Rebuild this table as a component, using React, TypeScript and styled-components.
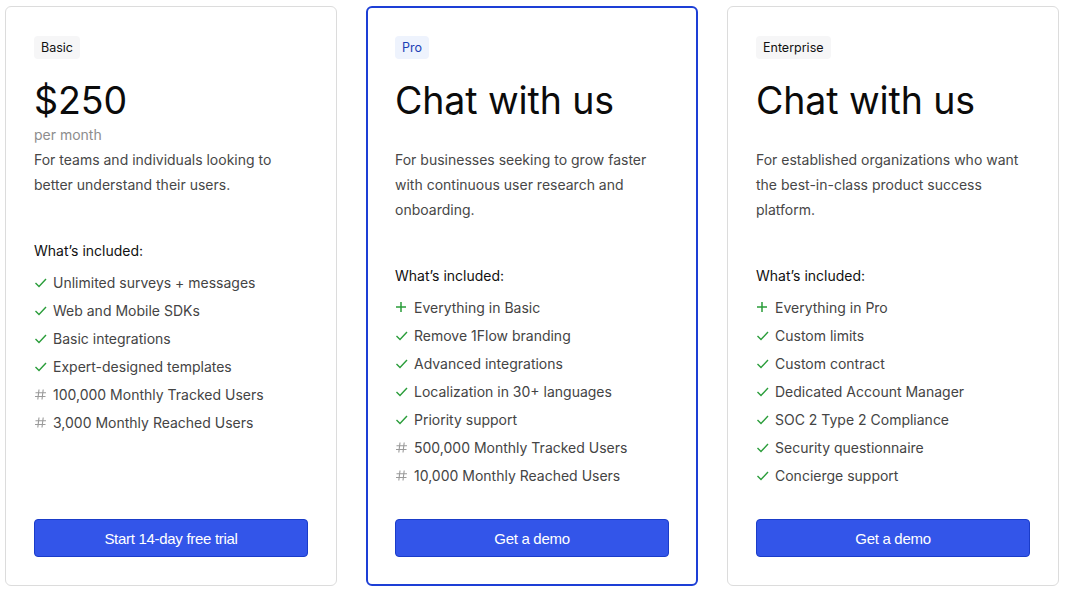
import React from "react";
import styled, { createGlobalStyle } from "styled-components";

const Global = createGlobalStyle`
  html, body { margin: 0; padding: 0; background: #ffffff; }
  body { font-family: Inter, "Noto Sans", sans-serif; -webkit-font-smoothing: antialiased; }
  * { box-sizing: border-box; }
`;

const Page = styled.div`
  display: grid;
  grid-template-columns: repeat(3, 332px);
  column-gap: 29px;
  padding: 6px 0 0 5px;
  width: 1070px;
  height: 596px;
`;

const Card = styled.div<{ $active?: boolean }>`
  display: flex;
  flex-direction: column;
  height: 580px;
  padding: 29px 28px 28px 28px;
  border: ${(p) => (p.$active ? "2px solid #1d3fd6" : "1px solid #dcdcdc")};
  border-radius: 6px;
  background: #fff;
  ${(p) => (p.$active ? "padding: 28px 27px 27px 27px;" : "")}
`;

const Badge = styled.span<{ $blue?: boolean }>`
  align-self: flex-start;
  font-size: 12.5px;
  line-height: 23px;
  padding: 0 7px;
  border-radius: 4px;
  background: ${(p) => (p.$blue ? "#eef3fd" : "#f6f6f7")};
  color: ${(p) => (p.$blue ? "#1b3fb5" : "#111")};
`;

const Price = styled.div`
  margin-top: 18px;
  font-size: 37.5px;
  line-height: 48px;
  color: #0b0b0b;
  letter-spacing: -0.1px;
`;

const PriceNote = styled.div`
  font-size: 14px;
  line-height: 20px;
  color: #8d8d8d;
  min-height: 20px;
`;

const Desc = styled.p`
  margin: 2px 0 0;
  font-size: 14px;
  line-height: 25px;
  color: #474747;
`;

const IncludedTitle = styled.div`
  margin-top: 44px;
  margin-bottom: 7px;
  font-size: 14px;
  line-height: 20px;
  color: #111;
`;

const List = styled.ul`
  list-style: none;
  margin: 0;
  padding: 0;
`;

const Item = styled.li`
  display: flex;
  align-items: center;
  height: 28px;
  font-size: 14px;
  color: #444;
`;

const IconBox = styled.span`
  display: inline-flex;
  align-items: center;
  justify-content: flex-start;
  width: 19px;
  flex: none;
`;

const Button = styled.button`
  margin-top: auto;
  height: 38px;
  width: 100%;
  border: 1px solid #1a3cc9;
  border-radius: 4px;
  background: #3355e9;
  color: #fff;
  font-family: "Liberation Sans", Arial, sans-serif;
  font-size: 15px;
  letter-spacing: -0.3px;
  cursor: pointer;
`;

type Kind = "check" | "plus" | "hash";

const Icon = ({ kind }: { kind: Kind }) => {
  if (kind === "check")
    return (
      <svg width="13" height="13" viewBox="0 0 13 13">
        <polyline points="1.5,7 5,10.5 12,3" fill="none" stroke="#2a9d3a" strokeWidth="1.4" />
      </svg>
    );
  if (kind === "plus")
    return (
      <svg width="12" height="12" viewBox="0 0 12 12">
        <path d="M6 1v10M1 6h10" stroke="#2a9d3a" strokeWidth="1.5" />
      </svg>
    );
  return (
    <svg width="13" height="13" viewBox="0 0 13 13">
      <path d="M5 1.5 3.8 11.5M9.2 1.5 8 11.5M1.5 4.7h10.5M1 8.5h10.5" stroke="#9a9a9a" strokeWidth="1.1" fill="none" />
    </svg>
  );
};

type Plan = {
  badge: string;
  blue?: boolean;
  price: string;
  note?: string;
  desc: string;
  items: [Kind, string][];
  cta: string;
  active?: boolean;
};

const plans: Plan[] = [
  {
    badge: "Basic",
    price: "$250",
    note: "per month",
    desc: "For teams and individuals looking to better understand their users.",
    items: [
      ["check", "Unlimited surveys + messages"],
      ["check", "Web and Mobile SDKs"],
      ["check", "Basic integrations"],
      ["check", "Expert-designed templates"],
      ["hash", "100,000 Monthly Tracked Users"],
      ["hash", "3,000 Monthly Reached Users"],
    ],
    cta: "Start 14-day free trial",
  },
  {
    badge: "Pro",
    blue: true,
    active: true,
    price: "Chat with us",
    desc: "For businesses seeking to grow faster with continuous user research and onboarding.",
    items: [
      ["plus", "Everything in Basic"],
      ["check", "Remove 1Flow branding"],
      ["check", "Advanced integrations"],
      ["check", "Localization in 30+ languages"],
      ["check", "Priority support"],
      ["hash", "500,000 Monthly Tracked Users"],
      ["hash", "10,000 Monthly Reached Users"],
    ],
    cta: "Get a demo",
  },
  {
    badge: "Enterprise",
    price: "Chat with us",
    desc: "For established organizations who want the best-in-class product success platform.",
    items: [
      ["plus", "Everything in Pro"],
      ["check", "Custom limits"],
      ["check", "Custom contract"],
      ["check", "Dedicated Account Manager"],
      ["check", "SOC 2 Type 2 Compliance"],
      ["check", "Security questionnaire"],
      ["check", "Concierge support"],
    ],
    cta: "Get a demo",
  },
];

export default function App() {
  return (
    <>
      <Global />
      <Page>
        {plans.map((p) => (
          <Card key={p.badge} $active={p.active}>
            <Badge $blue={p.blue}>{p.badge}</Badge>
            <Price>{p.price}</Price>
            <PriceNote>{p.note ?? "\u00a0"}</PriceNote>
            <Desc>{p.desc}</Desc>
            <IncludedTitle>What’s included:</IncludedTitle>
            <List>
              {p.items.map(([k, t]) => (
                <Item key={t}>
                  <IconBox>
                    <Icon kind={k} />
                  </IconBox>
                  {t}
                </Item>
              ))}
            </List>
            <Button>{p.cta}</Button>
          </Card>
        ))}
      </Page>
    </>
  );
}
